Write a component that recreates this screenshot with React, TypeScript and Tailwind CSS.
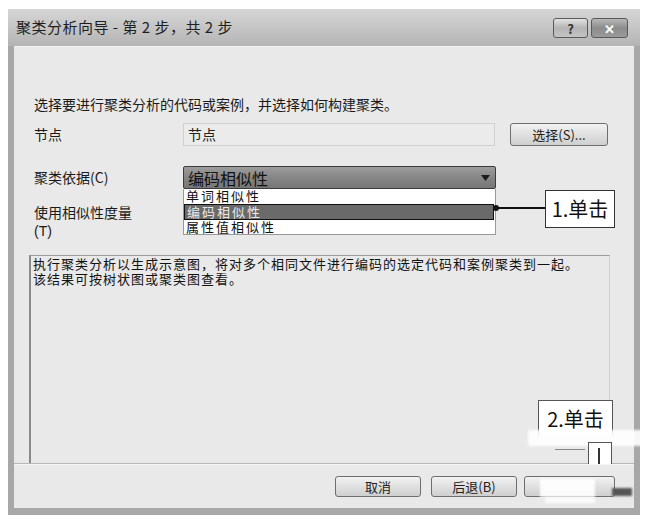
const cjk = "font-['Noto_Sans_CJK_SC','Noto_Sans',sans-serif]";
const tight = "font-['Liberation_Sans','Noto_Sans_CJK_SC',sans-serif]";

function TitleButton({ children, dark }: { children: React.ReactNode; dark?: boolean }) {
  return (
    <div
      className={`h-[20px] flex items-center justify-center rounded-[3px] border border-[#5a5a5a] text-[13px] font-bold leading-none ${
        dark
          ? 'w-[37px] bg-gradient-to-b from-[#b8b8b8] via-[#8c8c8c] to-[#9a9a9a] text-white'
          : 'w-[35px] bg-gradient-to-b from-[#e2e2e2] via-[#b4b4b4] to-[#c4c4c4] text-[#333]'
      }`}
    >
      {children}
    </div>
  );
}

function Button({ children, className = '' }: { children?: React.ReactNode; className?: string }) {
  return (
    <div
      className={`h-[21px] w-[86px] flex items-center justify-center rounded-[3px] border border-[#6e6e6e] bg-gradient-to-b from-[#f2f2f2] via-[#e0e0e0] to-[#cfcfcf] text-[13px] text-[#222] ${className}`}
    >
      {children}
    </div>
  );
}

export default function App() {
  return (
    <div className={`relative w-[650px] h-[523px] overflow-hidden bg-white ${cjk}`}>
      <div className="ml-[8px] mt-[9px] w-[632px] h-[506px] flex flex-col bg-[#a8a8a8]">
        {/* title bar */}
        <div className="h-[37px] shrink-0 flex items-center justify-between pl-[8px] pr-[12px] bg-gradient-to-b from-[#d6d6d6] to-[#b4b4b4]">
          <span className="text-[15px] text-[#1e1e1e] tracking-[0.5px]">聚类分析向导 - 第 2 步，共 2 步</span>
          <div className="flex gap-[3px] mt-[1px]">
            <TitleButton>?</TitleButton>
            <TitleButton dark>✕</TitleButton>
          </div>
        </div>

        {/* client */}
        <div className="mx-[6px] mb-[7px] flex-1 flex flex-col bg-[#e9e9e9] border-t border-[#f4f4f4]">
          <p className="pt-[47px] pl-[20px] text-[14px] leading-[20px] text-[#1a1a1a]">
            选择要进行聚类分析的代码或案例，并选择如何构建聚类。
          </p>

          <div className="mt-[9px] pl-[20px] flex items-center h-[23px]">
            <span className="w-[149px] text-[14px] text-[#1a1a1a]">节点</span>
            <div className="w-[312px] h-[23px] flex items-center pl-[4px] bg-[#ebebeb] border border-[#cfcfcf] text-[14px] text-[#222]">
              节点
            </div>
            <Button className="ml-[15px] w-[98px] h-[23px]">选择(S)...</Button>
          </div>

          <div className="mt-[20px] pl-[20px] flex items-center h-[23px]">
            <span className="w-[149px] text-[14px] text-[#1a1a1a]">聚类依据(C)</span>
            <div className="relative w-[313px] h-[23px]">
              <div className="h-full flex items-center justify-between pl-[4px] pr-[5px] rounded-[2px] border border-[#3c3c3c] bg-gradient-to-b from-[#9c9c9c] via-[#868686] to-[#767676] text-[16px] text-[#111]">
                <span>编码相似性</span>
                <svg width="9" height="6" viewBox="0 0 9 6">
                  <path d="M0 0h9L4.5 6z" fill="#1a1a1a" />
                </svg>
              </div>
              <div className={`absolute left-0 top-full w-full h-[46px] flex flex-col bg-white border border-[#9a9a9a] border-t-0 text-[13px] leading-[15px] tracking-[2px] ${tight}`}>
                <span className="pl-[2px] h-[15px] text-[#111]">单词相似性</span>
                <span className="pl-[2px] h-[16px] w-[310px] flex items-center bg-[#6a6a6a] border border-[#111] text-[#e8e8e8]">编码相似性</span>
                <span className="pl-[2px] h-[15px] text-[#111]">属性值相似性</span>
              </div>
            </div>
          </div>

          <div className={`mt-[15px] pl-[20px] w-[130px] text-[14px] leading-[18px] text-[#1a1a1a] ${tight}`}>
            使用相似性度量
            <br />
            (T)
          </div>

          <div className={`mt-[15px] ml-[15px] w-[581px] flex-1 border-l-2 border-t border-r border-l-[#8a8a8a] border-t-[#9c9c9c] border-r-[#cfcfcf] px-[2px] pt-[1px] text-[13px] leading-[15px] tracking-[1px] text-[#111] ${tight}`}>
            执行聚类分析以生成示意图，将对多个相同文件进行编码的选定代码和案例聚类到一起。
            <br />
            该结果可按树状图或聚类图查看。
          </div>

          <div className="h-[2px] border-t border-[#b8b8b8] bg-[#f6f6f6]" />

          <div className="h-[43px] flex items-start justify-end gap-[10px] pt-[11px] pr-[19px]">
            <Button>取消</Button>
            <Button>后退(B)</Button>
            <Button className="ml-[-3px] w-[91px]" />
          </div>
        </div>
      </div>

      {/* callout 1 */}
      <div className="absolute left-[496px] top-[207px] w-[50px] h-[2px] bg-[#111]" />
      <div className="absolute left-[493px] top-[205px] w-[6px] h-[6px] rounded-full bg-[#111]" />
      <div className="absolute left-[545px] top-[190px] w-[70px] h-[38px] flex items-center justify-center bg-white border border-[#333] text-[20px] text-[#111]">
        1.单击
      </div>

      {/* callout 2, partly washed out */}
      <div className="absolute left-[538px] top-[400px] w-[75px] h-[36px] flex items-center justify-center bg-white border border-[#555] border-b-0 text-[20px] text-[#111]">
        2.单击
      </div>
      <div className="absolute left-[528px] top-[430px] w-[122px] h-[16px] bg-white/90 blur-[1px]" />
      <div className="absolute left-[588px] top-[442px] w-[24px] h-[22px] bg-white border border-[#555] border-b-0" />
      <div className="absolute left-[598px] top-[448px] w-[2px] h-[16px] bg-[#333]" />
      <div className="absolute left-[555px] top-[449px] w-[30px] h-[1px] bg-[#888]" />
      <div className="absolute left-[540px] top-[479px] w-[55px] h-[18px] bg-white/90 blur-[1px]" />
      <div className="absolute left-[545px] top-[497px] w-[50px] h-[6px] bg-white/80 blur-[1px]" />
      <div className="absolute left-[612px] top-[488px] w-[20px] h-[8px] bg-[#555] blur-[1px]" />
    </div>
  );
}
